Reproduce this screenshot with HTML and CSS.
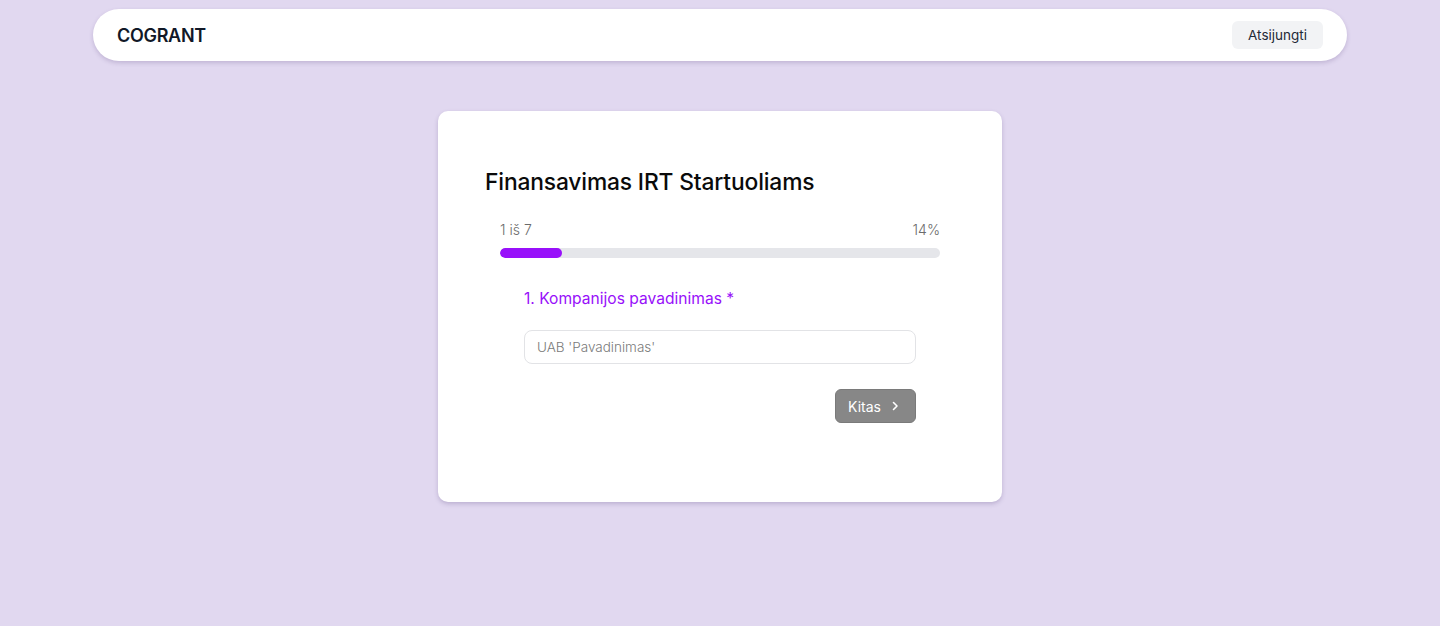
FILE: index.html
```html
<!DOCTYPE html>
<html lang="lt">
<head>
<meta charset="utf-8">
<title>COGRANT</title>
<link rel="stylesheet" href="styles.css">
</head>
<body>
<div class="page">
  <header class="nav">
    <div class="logo">COGRANT</div>
    <button class="logout" type="button">Atsijungti</button>
  </header>
  <main class="main">
    <section class="card">
      <h1 class="title">Finansavimas IRT Startuoliams</h1>
      <div class="progress">
        <div class="progress-labels">
          <span>1 iš 7</span>
          <span>14%</span>
        </div>
        <div class="bar"><div class="bar-fill" style="width:14%"></div></div>
      </div>
      <div class="question">
        <label class="q-label" for="company">1. Kompanijos pavadinimas *</label>
        <input class="q-input" id="company" type="text" placeholder="UAB 'Pavadinimas'">
        <div class="actions">
          <button class="next" type="button" disabled>
            <span>Kitas</span>
            <svg width="16" height="16" viewBox="0 0 16 16" fill="none" stroke="currentColor" stroke-width="1.6" stroke-linecap="round" stroke-linejoin="round"><path d="M6.5 4.5 10 8l-3.5 3.5"/></svg>
          </button>
        </div>
      </div>
    </section>
  </main>
</div>
</body>
</html>
```
FILE: styles.css
```css
* { box-sizing: border-box; }
html, body { margin: 0; padding: 0; }
body {
  background: #e1d8f0;
  font-family: Inter, "Noto Sans", "Liberation Sans", sans-serif;
  color: #111;
  min-height: 626px;
}
.page {
  padding: 9px 93px 0;
}
.nav {
  height: 52px;
  background: #fff;
  border-radius: 26px;
  box-shadow: 0 2px 4px rgba(80, 60, 120, 0.22);
  display: flex;
  align-items: center;
  justify-content: space-between;
  padding: 0 24px 0 24px;
}
.logo {
  font-size: 18px;
  font-weight: 600;
  color: #111827;
  letter-spacing: -0.3px;
}
.logout {
  height: 28px;
  padding: 0 16px;
  border: none;
  border-radius: 6px;
  background: #f2f3f5;
  color: #1f2937;
  font-family: inherit;
  font-size: 13.5px;
}
.main {
  display: flex;
  justify-content: center;
  padding-top: 50px;
}
.card {
  width: 564px;
  background: #fff;
  border-radius: 10px;
  box-shadow: 0 2px 4px rgba(80, 60, 120, 0.25);
  padding: 55px 48px 79px 47px;
}
.title {
  margin: 0;
  font-size: 22.8px;
  line-height: 32px;
  font-weight: 500;
  color: #0a0a0a;
  letter-spacing: -0.15px;
}
.progress {
  margin: 22px 14px 0 15px;
}
.progress-labels {
  display: flex;
  justify-content: space-between;
  font-size: 14px;
  line-height: 20px;
  font-weight: 300;
  color: #6b6b6b;
}
.bar {
  margin-top: 8px;
  height: 10px;
  border-radius: 5px;
  background: #e5e6ea;
  overflow: hidden;
}
.bar-fill {
  height: 100%;
  border-radius: 5px;
  background: #9810fa;
}
.question {
  margin: 27px 38px 0 39px;
  display: flex;
  flex-direction: column;
}
.q-label {
  font-size: 15.6px;
  line-height: 28px;
  color: #9810fa;
}
.q-input {
  margin-top: 17px;
  height: 34px;
  border: 1px solid #e2e3e6;
  border-radius: 8px;
  padding: 0 12px;
  font-family: inherit;
  font-size: 13.5px;
  color: #111;
  outline: none;
}
.q-input::placeholder {
  color: #7a7a7a;
  font-weight: 300;
}
.actions {
  margin-top: 25px;
  display: flex;
  justify-content: flex-end;
}
.next {
  height: 34px;
  width: 81px;
  display: flex;
  align-items: center;
  justify-content: space-between;
  padding: 0 12px 0 12px;
  border: 1px solid #7a7a7a;
  border-radius: 6px;
  background: #878787;
  color: #fff;
  font-family: inherit;
  font-size: 14px;
}
.next svg { display: block; }
```
